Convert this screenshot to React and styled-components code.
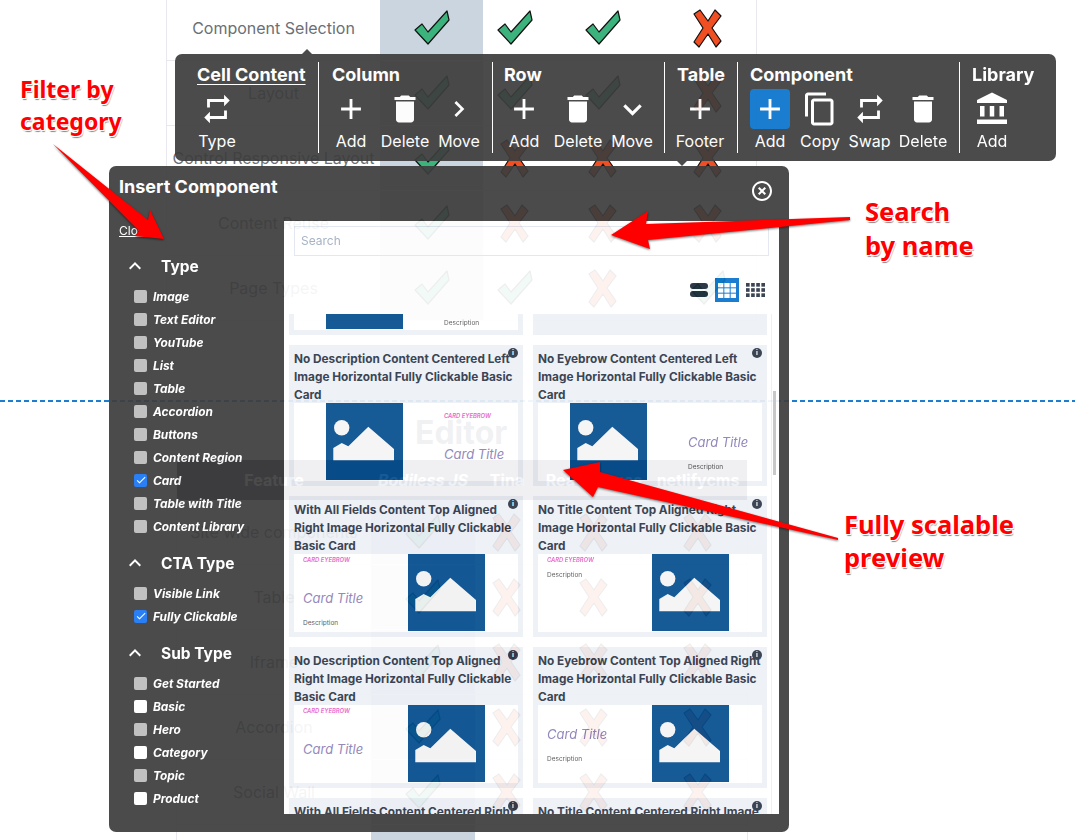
import React from "react";
import styled, { createGlobalStyle } from "styled-components";
import {
  MdAdd,
  MdDelete,
  MdRepeat,
  MdContentCopy,
  MdAccountBalance,
  MdChevronRight,
  MdExpandMore,
  MdExpandLess,
  MdCheck,
  MdHighlightOff,
} from "react-icons/md";

const GlobalStyle = createGlobalStyle`
  html, body {
    margin: 0;
    height: 840px;
    overflow: hidden;
    background: #fff;
    font-family: Inter, "Liberation Sans", sans-serif;
  }
  * { box-sizing: border-box; }
`;

const Page = styled.div`
  position: relative;
  width: 1075px;
  height: 840px;
  overflow: hidden;
`;

/* page behind the overlays */
const UpperTable = styled.div`
  width: 591px;
  margin: -4px 0 0 166px;
  border-left: 1px solid #e8e8ee;
  border-right: 1px solid #e8e8ee;
`;

const LowerTable = styled.div`
  width: 572px;
  margin-left: 176px;
  border-left: 1px solid #e8e8ee;
  border-right: 1px solid #e8e8ee;
`;

const Row = styled.div`
  display: grid;
  grid-template-columns: ${(p) => p.$cols};
  height: 65px;
  border-bottom: 1px solid #e8e8ee;
`;

const HeadRow = styled.div`
  display: grid;
  grid-template-columns: ${(p) => p.$cols};
  height: 40px;
  background: #2b3350;
  color: #fff;
  font-size: 16px;
  font-weight: 700;
`;

const HeadCell = styled.div`
  display: flex;
  align-items: center;
  justify-content: center;
  font-style: ${(p) => (p.$italic ? "italic" : "normal")};
  white-space: nowrap;
`;

const FeatureCell = styled.div`
  display: flex;
  align-items: center;
  justify-content: center;
  color: #6b6f76;
  font-size: 16px;
  white-space: nowrap;
`;

const MarkCell = styled.div`
  display: flex;
  align-items: center;
  justify-content: center;
  background: ${(p) => (p.$active ? "#cbd5df" : "transparent")};
`;

const DashedLine = styled.div`
  height: 2px;
  margin-top: 79px;
  background: repeating-linear-gradient(90deg, #1b7ed0 0 5px, transparent 5px 8px);
`;

const EditorHeading = styled.h2`
  margin: 0;
  height: 58px;
  padding-top: 9px;
  padding-left: 415px;
  font-size: 32px;
  line-height: 44px;
  font-weight: 700;
  color: #333a56;
`;

/* top toolbar */
const Toolbar = styled.div`
  position: absolute;
  left: 175px;
  top: 54px;
  width: 881px;
  height: 107px;
  padding: 8px 0;
  display: flex;
  background: #3e3e3e;
  opacity: 0.93;
  border-radius: 7px;
  color: #fff;
  &::before {
    content: "";
    position: absolute;
    left: 127px;
    top: -5px;
    border: 5px solid transparent;
    border-top: 0;
    border-bottom-color: #3e3e3e;
  }
  &::after {
    content: "";
    position: absolute;
    left: 502px;
    bottom: -5px;
    border: 5px solid transparent;
    border-bottom: 0;
    border-top-color: #3e3e3e;
  }
`;

const ToolSection = styled.div`
  width: ${(p) => p.$width}px;
  padding-left: ${(p) => p.$pad}px;
  border-right: ${(p) => (p.$last ? "none" : "1px solid #fff")};
`;

const ToolTitle = styled.div`
  height: 27px;
  line-height: 26px;
  font-size: 18px;
  font-weight: 700;
  white-space: nowrap;
  text-decoration: ${(p) => (p.$underline ? "underline" : "none")};
  text-underline-offset: 3px;
`;

const ToolItems = styled.div`
  display: flex;
  gap: 10px;
  margin-left: ${(p) => p.$shift || 0}px;
`;

const ToolItem = styled.div`
  width: ${(p) => p.$width || 40}px;
  display: flex;
  flex-direction: column;
  align-items: center;
  font-size: 16px;
  line-height: 24px;
`;

const ToolIcon = styled.div`
  width: 40px;
  height: 40px;
  display: flex;
  align-items: center;
  justify-content: center;
  border-radius: 4px;
  background: ${(p) => (p.$active ? "#0a74cc" : "transparent")};
`;

/* insert component dialog */
const Dialog = styled.div`
  position: absolute;
  left: 109px;
  top: 166px;
  width: 680px;
  height: 666px;
  background: #3e3e3e;
  opacity: 0.93;
  border-radius: 7px;
  color: #fff;
`;

const DialogHeader = styled.div`
  height: 55px;
  padding: 10px 15px 0 10px;
  display: flex;
  align-items: flex-start;
  justify-content: space-between;
`;

const DialogTitle = styled.div`
  font-size: 18px;
  line-height: 22px;
  font-weight: 700;
`;

const DialogClose = styled.div`
  margin-top: 3px;
  line-height: 0;
`;

const DialogBody = styled.div`
  display: flex;
  height: 593px;
`;

const Sidebar = styled.div`
  width: 175px;
  padding-left: 10px;
`;

const CloseLink = styled.div`
  height: 32px;
  padding-top: 2px;
  font-size: 12px;
  line-height: 15px;
  text-decoration: underline;
`;

const FilterGroup = styled.div`
  margin-bottom: 12.5px;
`;

const FilterTitle = styled.div`
  display: flex;
  align-items: center;
  height: 26px;
  margin-bottom: 5.5px;
  padding-left: 4px;
  font-size: 15.5px;
  font-weight: 700;
`;

const FilterTitleIcon = styled.span`
  display: flex;
  width: 38px;
`;

const FilterItem = styled.div`
  display: flex;
  align-items: center;
  height: 23px;
  padding-left: 15px;
  gap: 6px;
  font-size: 11.9px;
  font-weight: 700;
  font-style: italic;
  white-space: nowrap;
`;

const CheckBox = styled.span`
  width: 13px;
  height: 13px;
  display: flex;
  align-items: center;
  justify-content: center;
  border-radius: 2px;
  background: ${(p) => (p.$state === "on" ? "#1a76f5" : p.$state === "white" ? "#fff" : "#bdbdbd")};
`;

const Panel = styled.div`
  width: 495px;
  display: flex;
  flex-direction: column;
  background: #fff;
  color: #2d3748;
`;

const SearchInput = styled.div`
  height: 30px;
  margin: 5px 10px 0;
  padding-left: 6px;
  border: 1px solid #e2e8f0;
  color: #a0aec0;
  font-size: 12px;
  line-height: 28px;
`;

const ViewToggles = styled.div`
  display: flex;
  align-items: center;
  justify-content: flex-end;
  height: 24px;
  margin-top: 22px;
  padding-right: 14px;
  gap: 7px;
`;

const ToggleButton = styled.div`
  width: 24px;
  height: 24px;
  display: flex;
  align-items: center;
  justify-content: center;
  background: #0a74cc;
`;

const ListArea = styled.div`
  position: relative;
  height: 500px;
  margin-top: 12px;
  overflow: hidden;
  border-right: 3px solid #fff;
`;

const ScrollThumb = styled.div`
  position: absolute;
  right: 0;
  top: 77px;
  width: 3px;
  height: 84px;
  background: #c4c4c4;
`;

const ScrollTrack = styled.div`
  position: absolute;
  right: 4px;
  top: 0;
  bottom: 0;
  width: 1px;
  background: #edf0f4;
`;

const CardGrid = styled.div`
  display: grid;
  grid-template-columns: 234px 234px;
  grid-auto-rows: 141px;
  gap: 10px;
  margin-top: -120px;
  padding-left: 5px;
`;

const Card = styled.div`
  position: relative;
  padding: 5px;
  background: #edf0f6;
`;

const CardName = styled.div`
  height: 53px;
  font-size: 11.8px;
  line-height: 18px;
  font-weight: 700;
  color: #2d3748;
`;

const InfoDot = styled.span`
  position: absolute;
  right: 5px;
  top: 3px;
  width: 10px;
  height: 10px;
  border-radius: 50%;
  background: #2d3748;
  color: #fff;
  font-size: 7px;
  line-height: 10px;
  font-weight: 700;
  text-align: center;
`;

const Preview = styled.div`
  display: flex;
  flex-direction: ${(p) => (p.$right ? "row-reverse" : "row")};
  height: 78px;
  padding: ${(p) => (p.$right ? "0 33px 0 9px" : "0 0 0 32px")};
  gap: ${(p) => (p.$right ? "0" : "41px")};
  background: #fff;
  overflow: hidden;
`;

const PreviewText = styled.div`
  flex: 1;
  padding-top: ${(p) => p.$pad}px;
`;

const Eyebrow = styled.div`
  height: 10px;
  margin-bottom: ${(p) => (p.$tight ? 5 : 23)}px;
  color: #e85bc8;
  font-size: 5.8px;
  line-height: 10px;
  font-weight: 600;
  font-style: italic;
  white-space: nowrap;
`;

const PreviewTitle = styled.div`
  height: 20px;
  margin-bottom: 10px;
  color: #8c7fb8;
  font-size: 13px;
  line-height: 20px;
  font-style: italic;
  white-space: nowrap;
`;

const PreviewDesc = styled.div`
  height: 10px;
  color: #555;
  font-size: 6.5px;
  line-height: 10px;
  white-space: nowrap;
`;

/* red annotations pasted over the screenshot */
const Note = styled.div`
  position: absolute;
  left: ${(p) => p.$x}px;
  top: ${(p) => p.$y}px;
  color: #f00;
  font-family: "Noto Sans", "Open Sans", sans-serif;
  font-size: ${(p) => p.$size}px;
  line-height: ${(p) => p.$lh}px;
  font-weight: 700;
  white-space: nowrap;
  text-shadow: 1px 0 0 #fff, -1px 0 0 #fff, 0 1px 0 #fff, 0 -1px 0 #fff, 1px 1px 0 #fff, -1px 1px 0 #fff,
    1px -1px 0 #fff, -1px -1px 0 #fff, 1px 2px 1px #888;
`;

const ArrowLayer = styled.svg`
  position: absolute;
  left: 0;
  top: 0;
  pointer-events: none;
  filter: drop-shadow(0 1px 1px rgba(0, 0, 0, 0.55));
`;

const upperCols = "213px 103px 64px 112px 97px";
const lowerCols = "194px 104px 64px 110px 98px";

const upperRows = [
  ["Component Selection", "yyyn"],
  ["Layout", "yyyn"],
  ["Control Responsive Layout", "ynnn"],
  ["Content Reuse", "ynnn"],
  ["Page Types", "yyny"],
];

const lowerRows = ["Site wide components", "Table", "Iframe", "Accordion", "Social Wall"];

const typeFilters = [
  ["Image"],
  ["Text Editor"],
  ["YouTube"],
  ["List"],
  ["Table"],
  ["Accordion"],
  ["Buttons"],
  ["Content Region"],
  ["Card", "on"],
  ["Table with Title"],
  ["Content Library"],
];
const ctaFilters = [["Visible Link"], ["Fully Clickable", "on"]];
const subFilters = [
  ["Get Started"],
  ["Basic", "white"],
  ["Hero"],
  ["Category", "white"],
  ["Topic"],
  ["Product", "white"],
];

const cards = [
  { name: "With All Fields Content Centered Left Image Horizontal Fully Clickable Basic Card", pad: 3, eyebrow: 1, title: 1, desc: 1 },
  { name: "", blank: true },
  { name: "No Description Content Centered Left Image Horizontal Fully Clickable Basic Card", pad: 8, eyebrow: 1, title: 1 },
  { name: "No Eyebrow Content Centered Left Image Horizontal Fully Clickable Basic Card", pad: 29, title: 1, desc: 1 },
  { name: "With All Fields Content Top Aligned Right Image Horizontal Fully Clickable Basic Card", right: 1, pad: 1, eyebrow: 1, title: 1, desc: 1 },
  { name: "No Title Content Top Aligned Right Image Horizontal Fully Clickable Basic Card", right: 1, pad: 1, eyebrow: 1, desc: 1 },
  { name: "No Description Content Top Aligned Right Image Horizontal Fully Clickable Basic Card", right: 1, pad: 1, eyebrow: 1, title: 1 },
  { name: "No Eyebrow Content Top Aligned Right Image Horizontal Fully Clickable Basic Card", right: 1, pad: 19, title: 1, desc: 1 },
  { name: "With All Fields Content Centered Right Image Horizontal Fully Clickable Basic Card", right: 1, pad: 3, eyebrow: 1, title: 1, desc: 1 },
  { name: "No Title Content Centered Right Image Horizontal Fully Clickable Basic Card", right: 1, pad: 20, eyebrow: 1, desc: 1 },
];

function CheckMark() {
  return (
    <svg width="36" height="36" viewBox="-1 -1 36 36">
      <polygon points="0,19 7,13 13,21 32,0 34,9 13,33" fill="#3cb37d" stroke="#111" strokeWidth="1.2" strokeLinejoin="round" />
    </svg>
  );
}

function CrossMark() {
  return (
    <svg width="30" height="39" viewBox="-1 -1 30 39">
      <polygon
        points="0,4 9,18 0,32 5,37 14,24 22,37 27,31 18,18 27,6 21,0 14,11 6,0"
        fill="#f04e23"
        stroke="#111"
        strokeWidth="1.2"
        strokeLinejoin="round"
      />
    </svg>
  );
}

function ImagePlaceholder() {
  return (
    <svg width="77" height="77" viewBox="0 0 77 77" style={{ flex: "none" }}>
      <rect width="77" height="77" fill="#054e8e" />
      <circle cx="15.7" cy="24.7" r="7.7" fill="#f5f5f5" />
      <polygon points="7.3,45 15.7,40 22.3,43.3 42.3,23.7 68,46 68,57.3 7.3,57.3" fill="#f5f5f5" />
    </svg>
  );
}

function Filter({ label, state }) {
  return (
    <FilterItem>
      <CheckBox $state={state}>{state === "on" && <MdCheck size={12} color="#fff" />}</CheckBox>
      {label}
    </FilterItem>
  );
}

function FilterSection({ title, items }) {
  return (
    <FilterGroup>
      <FilterTitle>
        <FilterTitleIcon>
          <MdExpandLess size={24} />
        </FilterTitleIcon>
        {title}
      </FilterTitle>
      {items.map(([label, state]) => (
        <Filter key={label} label={label} state={state} />
      ))}
    </FilterGroup>
  );
}

function Tool({ icon, label, width, active }) {
  return (
    <ToolItem $width={width}>
      <ToolIcon $active={active}>{icon}</ToolIcon>
      {label}
    </ToolItem>
  );
}

function GridIcon({ cols, rows, w, h, color, gap }) {
  const cellW = (w - gap * (cols - 1)) / cols;
  const cellH = (h - gap * (rows - 1)) / rows;
  const cells = [];
  for (let r = 0; r < rows; r++) {
    for (let c = 0; c < cols; c++) {
      cells.push(<rect key={`${r}-${c}`} x={c * (cellW + gap)} y={r * (cellH + gap)} width={cellW} height={cellH} fill={color} />);
    }
  }
  return (
    <svg width={w} height={h} viewBox={`0 0 ${w} ${h}`}>
      {cells}
    </svg>
  );
}

export default function App() {
  return (
    <Page>
      <GlobalStyle />

      <UpperTable>
        {upperRows.map(([label, marks]) => (
          <Row key={label} $cols={upperCols}>
            <FeatureCell>{label}</FeatureCell>
            {marks.split("").map((m, i) => (
              <MarkCell key={i} $active={i === 0}>
                {m === "y" ? <CheckMark /> : <CrossMark />}
              </MarkCell>
            ))}
          </Row>
        ))}
      </UpperTable>

      <DashedLine />
      <EditorHeading>Editor</EditorHeading>

      <LowerTable>
        <HeadRow $cols={lowerCols}>
          <HeadCell>Feature</HeadCell>
          <HeadCell $italic>Bodiless JS</HeadCell>
          <HeadCell>Tina</HeadCell>
          <HeadCell>React Pages</HeadCell>
          <HeadCell>netlifycms</HeadCell>
        </HeadRow>
        {lowerRows.map((label) => (
          <Row key={label} $cols={lowerCols}>
            <FeatureCell>{label}</FeatureCell>
            <MarkCell $active>
              <CheckMark />
            </MarkCell>
            <MarkCell>
              <CrossMark />
            </MarkCell>
            <MarkCell>
              <CrossMark />
            </MarkCell>
            <MarkCell>
              <CrossMark />
            </MarkCell>
          </Row>
        ))}
        <Row $cols={lowerCols}>
          <FeatureCell />
          <MarkCell $active />
        </Row>
      </LowerTable>

      <Toolbar>
        <ToolSection $width={144} $pad={22}>
          <ToolTitle $underline>Cell Content</ToolTitle>
          <ToolItems>
            <Tool icon={<MdRepeat size={34} />} label="Type" />
          </ToolItems>
        </ToolSection>
        <ToolSection $width={174} $pad={13}>
          <ToolTitle>Column</ToolTitle>
          <ToolItems $shift={-1}>
            <Tool icon={<MdAdd size={34} />} label="Add" />
            <Tool icon={<MdDelete size={36} />} label="Delete" width={48} />
            <Tool icon={<MdChevronRight size={32} />} label="Move" />
          </ToolItems>
        </ToolSection>
        <ToolSection $width={172} $pad={11}>
          <ToolTitle>Row</ToolTitle>
          <ToolItems>
            <Tool icon={<MdAdd size={34} />} label="Add" />
            <Tool icon={<MdDelete size={36} />} label="Delete" width={48} />
            <Tool icon={<MdExpandMore size={37} />} label="Move" />
          </ToolItems>
        </ToolSection>
        <ToolSection $width={73} $pad={12}>
          <ToolTitle>Table</ToolTitle>
          <ToolItems $shift={-1}>
            <Tool icon={<MdAdd size={34} />} label="Footer" width={48} />
          </ToolItems>
        </ToolSection>
        <ToolSection $width={222} $pad={12}>
          <ToolTitle>Component</ToolTitle>
          <ToolItems>
            <Tool active icon={<MdAdd size={34} />} label="Add" />
            <Tool icon={<MdContentCopy size={36} />} label="Copy" />
            <Tool icon={<MdRepeat size={34} />} label="Swap" width={39} />
            <Tool icon={<MdDelete size={36} />} label="Delete" width={48} />
          </ToolItems>
        </ToolSection>
        <ToolSection $last $width={96} $pad={12}>
          <ToolTitle>Library</ToolTitle>
          <ToolItems>
            <Tool icon={<MdAccountBalance size={36} />} label="Add" />
          </ToolItems>
        </ToolSection>
      </Toolbar>

      <Dialog>
        <DialogHeader>
          <DialogTitle>Insert Component</DialogTitle>
          <DialogClose>
            <MdHighlightOff size={24} />
          </DialogClose>
        </DialogHeader>
        <DialogBody>
          <Sidebar>
            <CloseLink>Close</CloseLink>
            <FilterSection title="Type" items={typeFilters} />
            <FilterSection title="CTA Type" items={ctaFilters} />
            <FilterSection title="Sub Type" items={subFilters} />
          </Sidebar>
          <Panel>
            <SearchInput>Search</SearchInput>
            <ViewToggles>
              <svg width="18" height="14" viewBox="0 0 18 14">
                <rect width="18" height="6" rx="3" fill="#1f2a3a" />
                <rect y="8" width="18" height="6" rx="3" fill="#1f2a3a" />
              </svg>
              <ToggleButton>
                <GridIcon cols={3} rows={3} w={18} h={15} color="#fff" gap={1} />
              </ToggleButton>
              <GridIcon cols={4} rows={3} w={19} h={14} color="#2d3748" gap={1.5} />
            </ViewToggles>
            <ListArea>
              <CardGrid>
                {cards.map((c, i) =>
                  c.blank ? (
                    <Card key={i} />
                  ) : (
                    <Card key={i}>
                      <CardName>{c.name}</CardName>
                      <InfoDot>i</InfoDot>
                      <Preview $right={c.right}>
                        <ImagePlaceholder />
                        <PreviewText $pad={c.pad}>
                          {c.eyebrow && <Eyebrow $tight={!c.title}>CARD EYEBROW</Eyebrow>}
                          {c.title && <PreviewTitle>Card Title</PreviewTitle>}
                          {c.desc && <PreviewDesc>Description</PreviewDesc>}
                        </PreviewText>
                      </Preview>
                    </Card>
                  )
                )}
              </CardGrid>
              <ScrollTrack />
              <ScrollThumb />
            </ListArea>
          </Panel>
        </DialogBody>
      </Dialog>

      <Note $x={20} $y={73} $lh={32} $size={23}>
        Filter by
        <br />
        category
      </Note>
      <Note $x={865} $y={194} $lh={34} $size={25.5}>
        Search
        <br />
        by name
      </Note>
      <Note $x={844} $y={508} $lh={33} $size={25.5}>
        Fully scalable
        <br />
        preview
      </Note>

      <ArrowLayer width="1075" height="840" viewBox="0 0 1075 840">
        <polygon points="53,144 148,220 150,210 164,239 135,236 139,231" fill="#f00" />
        <polygon points="850,217 646,224 648,211 611,235 650,249 648,240 850,220" fill="#f00" />
        <polygon points="838,538 600,472 600,462 563,470 593,497 598,487 838,540" fill="#f00" />
      </ArrowLayer>
    </Page>
  );
}
